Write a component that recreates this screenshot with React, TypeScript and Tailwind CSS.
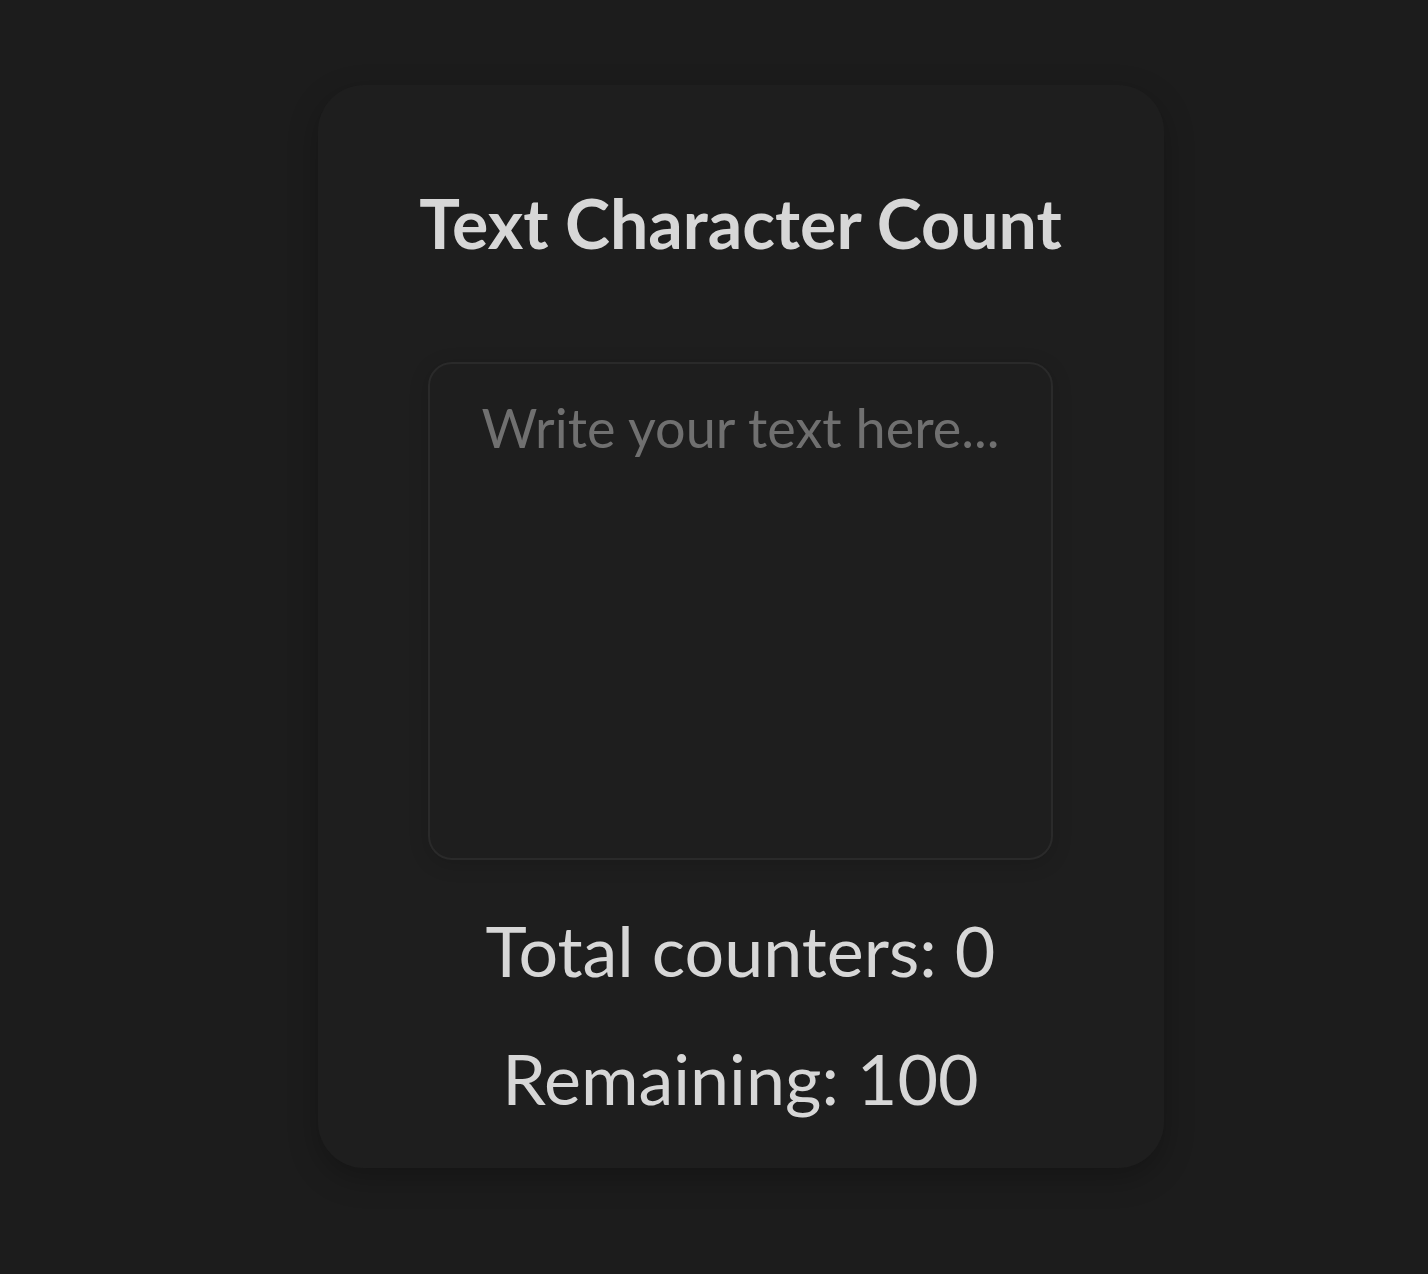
import React, { useState } from 'react'

const MAX = 100

export default function App(){
  const [text, setText] = useState('')

  return (
    <div className="min-h-[1274px] bg-[#1c1c1c] pt-[85px] pl-[53px] flex justify-center items-start" style={{ fontFamily: 'Lato, "Open Sans", sans-serif' }}>
      <div className="w-[846px] h-[1083px] rounded-[46px] bg-[#1e1e1e] shadow-[0_10px_30px_rgba(0,0,0,0.25)] flex flex-col items-center">
        <h1 className="mt-[98px] text-[68px] leading-[80px] font-bold text-[#d7d7d7]">Text Character Count</h1>
        <textarea
          className="mt-[99px] w-[625px] h-[498px] rounded-[24px] border-2 border-[#2a2a2a] bg-[#1e1e1e] shadow-[0_4px_20px_rgba(0,0,0,0.15)] px-[40px] py-[32px] text-center text-[54px] leading-[64px] text-[#d7d7d7] placeholder:text-[#707070] outline-none resize-none"
          placeholder="Write your text here..."
          maxLength={MAX}
          value={text}
          onChange={(e)=>setText(e.target.value)}
        />
        <p className="mt-[45px] text-[70px] leading-[90px] text-[#d7d7d7]">Total counters: {text.length}</p>
        <p className="mt-[38px] text-[70px] leading-[90px] text-[#d7d7d7]">Remaining: {MAX - text.length}</p>
      </div>
    </div>
  )
}
